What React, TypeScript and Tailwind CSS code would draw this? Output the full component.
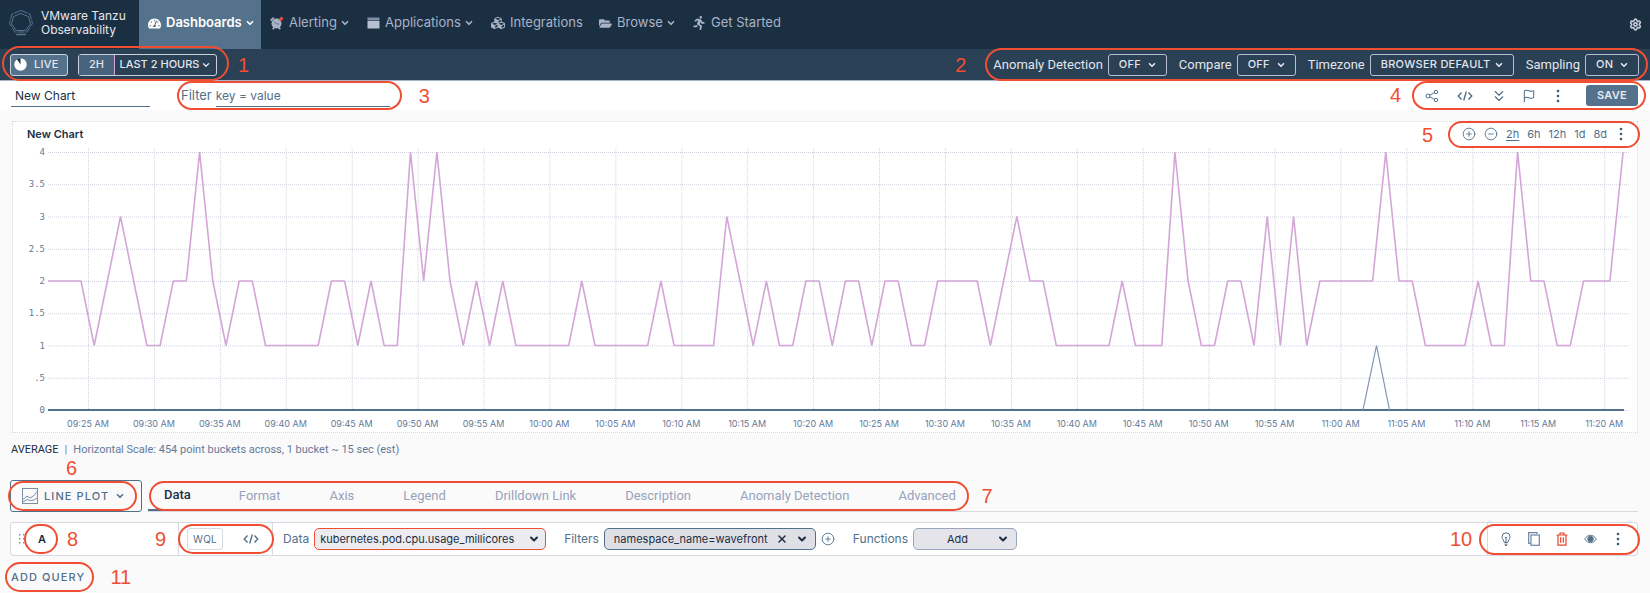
import React from "react";
import {
  ChevronDown,
  ChevronsDown,
  CirclePlus,
  CircleMinus,
  Flag,
  Settings,
  X,
} from "lucide-react";
import { FaTachometerAlt, FaCubes, FaFolderOpen, FaRunning } from "react-icons/fa";

/* ---------- callouts ---------- */

function Ring({ place }: { place: string }) {
  return (
    <span
      aria-hidden="true"
      className={`pointer-events-none absolute z-10 rounded-full border-2 border-[#f04e32] ${place}`}
    />
  );
}

function Num({ n, place }: { n: number; place: string }) {
  return (
    <span
      className={`pointer-events-none absolute z-10 font-['Liberation_Sans',sans-serif] text-xl leading-5 text-[#f04e32] ${place}`}
    >
      {n}
    </span>
  );
}

/* ---------- icons ---------- */

function Logo() {
  return (
    <svg width="26" height="28" viewBox="0 0 26 28" fill="none" stroke="#55748c" aria-hidden="true">
      <path d="M13 1.5 22 5l2.5 9.5L19 23H7L1.5 14.5 4 5Z" strokeWidth="1" strokeDasharray="7 1" />
      <path d="M13 4.5 20.5 7.5 22.5 15 17.5 21.5h-9L3.5 15l2-7.5Z" strokeWidth="1" />
      <path d="M8 25.500h10" strokeWidth="1.500" />
    </svg>
  );
}

function AlarmIcon() {
  return (
    <svg width="14" height="14" viewBox="0 0 14 14" aria-hidden="true">
      <circle cx="6.500" cy="7.500" r="5" fill="#a9b3c8" />
      <path d="M.6 4.600 3.800 1.600M2.800 13.200l1.400-1.800M10.200 13.200l-1.400-1.800" stroke="#a9b3c8" strokeWidth="1.800" />
      <path d="M4 5.500 6.500 8H9" stroke="#54728b" strokeWidth="1" fill="none" />
      <path d="M9.500 4.500 12.500 1.500" stroke="#f04e32" strokeWidth="3" />
    </svg>
  );
}

function WindowIcon() {
  return (
    <svg width="13" height="12" viewBox="0 0 13 12" aria-hidden="true">
      <rect x=".5" y=".5" width="12" height="3" fill="#7d8fa8" />
      <rect x=".5" y="4" width="12" height="7.500" fill="#b9bfd2" />
    </svg>
  );
}

function PieIcon() {
  return (
    <svg width="13" height="13" viewBox="0 0 13 13" aria-hidden="true">
      <circle cx="6.500" cy="6.500" r="6.200" fill="#fff" />
      <path d="M6.500 6.500V0L2.800 1Z" fill="#1b2f43" />
    </svg>
  );
}

function ShareIcon() {
  return (
    <svg width="14" height="14" viewBox="0 0 14 14" fill="none" stroke="#52708a" aria-hidden="true">
      <circle cx="3" cy="7" r="2" />
      <circle cx="11" cy="3" r="1.700" />
      <circle cx="11" cy="11" r="1.700" />
      <path d="M4.800 6.100 9.500 3.700M4.800 7.900l4.700 2.400" />
    </svg>
  );
}

function CodeIcon() {
  return (
    <svg width="16" height="12" viewBox="0 0 16 12" fill="none" stroke="#4a6881" strokeWidth="1.300" aria-hidden="true">
      <path d="M4.500 2.500 1.200 6l3.300 3.500M11.500 2.500 14.800 6l-3.300 3.500M9.300 1.500l-2.600 9" />
    </svg>
  );
}

function Dots() {
  return (
    <svg width="4" height="14" viewBox="0 0 4 14" fill="#3b5a75" aria-hidden="true">
      <circle cx="2" cy="2" r="1.300" />
      <circle cx="2" cy="7" r="1.300" />
      <circle cx="2" cy="12" r="1.300" />
    </svg>
  );
}

function PlotIcon() {
  return (
    <svg width="16" height="16" viewBox="0 0 16 16" fill="none" stroke="#7d8fa8" aria-hidden="true">
      <rect x=".5" y=".5" width="15" height="15" />
      <path d="M1 11.500 5 8l3 2 3.500-2L15 3.500M1 14l4-2.500 3 1 4-.5 3-2" />
    </svg>
  );
}

function GripIcon() {
  return (
    <svg width="6" height="10" viewBox="0 0 6 10" fill="#7d8fa8" aria-hidden="true">
      {[0, 4, 8].map((y) => (
        <g key={y}>
          <rect x="0" y={y} width="1.500" height="1.500" />
          <rect x="4" y={y} width="1.500" height="1.500" />
        </g>
      ))}
    </svg>
  );
}

function BulbIcon() {
  return (
    <svg width="10" height="14" viewBox="0 0 10 14" fill="none" stroke="#52708a" aria-hidden="true">
      <path d="M3.300 10.500C3.300 8.500 1 7.500 1 4.800a4 4 0 0 1 8 0c0 2.700-2.300 3.700-2.300 5.700Z" />
      <path d="M5 10V5.500M3.800 5 5 6l1.200-1M3.500 12.200h3M4 13.500h2" />
    </svg>
  );
}

function CopyIcon() {
  return (
    <svg width="12" height="14" viewBox="0 0 12 14" fill="none" stroke="#6d84a0" aria-hidden="true">
      <path d="M9 2V.7H.7v10.600H2.500" strokeWidth="1.200" />
      <rect x="3" y="3" width="8.300" height="10.300" strokeWidth="1.200" />
    </svg>
  );
}

function TrashIcon() {
  return (
    <svg width="12" height="14" viewBox="0 0 12 14" fill="none" stroke="#e8432c" strokeWidth="1.200" aria-hidden="true">
      <path d="M.5 3h11M4 3V1h4v2M2 3v10.200h8V3M4.700 5.200v5.600M7.300 5.200v5.600" />
    </svg>
  );
}

function EyeIcon() {
  return (
    <svg width="13" height="10" viewBox="0 0 14 10" fill="none" stroke="#52708a" aria-hidden="true">
      <path d="M.8 5C2.500 2.200 4.600 1 7 1s4.500 1.200 6.200 4C11.500 7.800 9.400 9 7 9S2.500 7.800.8 5Z" />
      <circle cx="7" cy="5" r="3" fill="#52708a" />
    </svg>
  );
}

/* ---------- navigation ---------- */

const navItems = [
  { label: "Dashboards", icon: <FaTachometerAlt size={13} />, menu: true, cls: "w-[122px] bg-[#54728b] font-semibold text-white" },
  { label: "Alerting", icon: <AlarmIcon />, menu: true, cls: "w-[97px] text-[#a9b3c8]" },
  { label: "Applications", icon: <WindowIcon />, menu: true, cls: "w-[124px] text-[#a9b3c8]" },
  { label: "Integrations", icon: <FaCubes size={14} />, menu: false, cls: "w-[108px] text-[#a9b3c8]" },
  { label: "Browse", icon: <FaFolderOpen size={13} />, menu: true, cls: "w-[93px] text-[#a9b3c8]" },
  { label: "Get Started", icon: <FaRunning size={14} />, menu: false, cls: "text-[#a9b3c8]" },
];

function NavBar() {
  return (
    <header className="flex h-[49px] items-stretch bg-[#1b2f43]">
      <a href="#home" className="flex w-[139px] shrink-0 items-center gap-[7px] pb-1 pl-2 text-[12px] leading-[14px] text-[#e6e8f0]">
        <Logo />
        <span>
          VMware Tanzu
          <br />
          Observability
        </span>
      </a>
      <nav className="flex">
        {navItems.map((item) => (
          <a
            key={item.label}
            href={`#${item.label}`}
            className={`flex shrink-0 items-center gap-[5px] pb-[3px] pl-[9px] text-[13px] whitespace-nowrap ${item.cls}`}
          >
            {item.icon}
            <span>{item.label}</span>
            {item.menu && <ChevronDown size={10} strokeWidth={4} className="-ml-0.5" />}
          </a>
        ))}
      </nav>
      <button type="button" aria-label="Settings" className="mr-2 ml-auto text-[#c4cada]">
        <Settings size={13} strokeWidth={3} />
      </button>
    </header>
  );
}

/* ---------- time and display bar ---------- */

function BarSelect({ id, label, value, width }: { id: string; label: string; value: string; width: string }) {
  return (
    <div className="flex items-center gap-[5px]">
      <label htmlFor={id} className="font-[Roboto,sans-serif] text-[13px] whitespace-nowrap">
        {label}
      </label>
      <div className="relative flex">
        <select
          id={id}
          defaultValue={value}
          className={`h-[22px] appearance-none rounded-[3px] border border-[#b8bfd2] bg-transparent pl-2.5 text-[11px] font-medium tracking-wide ${width}`}
        >
          <option>{value}</option>
        </select>
        <ChevronDown size={10} strokeWidth={4} className="pointer-events-none absolute top-[6px] right-2.5" />
      </div>
    </div>
  );
}

function TimeBar() {
  return (
    <div className="flex h-8 items-center justify-between border-b border-[#a9b3c8] bg-[#294055] pr-[11px] pl-2.5 text-[#e3e5ee]">
      <div className="relative flex gap-2.5">
        <button
          type="button"
          className="flex h-[22px] w-[58px] items-center gap-[7px] rounded-[3px] border border-[#c9cfdd] bg-[#54728b] pl-[3px] text-[11px] font-medium tracking-wide"
        >
          <PieIcon />
          LIVE
        </button>
        <button
          type="button"
          className="flex h-[22px] w-[139px] items-stretch rounded-[3px] border border-[#c9cfdd] text-[11px] font-medium whitespace-nowrap"
        >
          <span className="flex w-9 items-center justify-center border-r border-[#d4a6d8] bg-[#48647c]">2H</span>
          <span className="flex flex-1 items-center justify-center gap-0.5">
            LAST 2 HOURS
            <ChevronDown size={10} strokeWidth={3} />
          </span>
        </button>
        <Ring place="-top-2 -bottom-[5px] -left-2 -right-3" />
        <Num n={1} place="top-px -right-8" />
      </div>
      <div className="relative flex gap-3">
        <BarSelect id="anomaly" label="Anomaly Detection" value="OFF" width="w-[59px]" />
        <BarSelect id="compare" label="Compare" value="OFF" width="w-[59px]" />
        <BarSelect id="timezone" label="Timezone" value="BROWSER DEFAULT" width="w-[144px]" />
        <BarSelect id="sampling" label="Sampling" value="ON" width="w-[54px]" />
        <Ring place="-top-[6px] -bottom-[5px] -left-2 -right-[9px]" />
        <Num n={2} place="top-px -left-[38px]" />
      </div>
    </div>
  );
}

/* ---------- chart name, filter and actions ---------- */

function TitleBar() {
  return (
    <div className="flex h-[29px] items-center bg-white pr-3 pl-[11px] text-[12px]">
      <input
        aria-label="Chart name"
        defaultValue="New Chart"
        className="h-[22px] w-[139px] border-b border-[#52708a] pl-1 text-[#1b2f43]"
      />
      <div className="relative ml-[31px] flex items-center gap-1 text-[#52708a]">
        <label htmlFor="filter" className="text-[13px]">Filter</label>
        <input
          id="filter"
          placeholder="key = value"
          className="h-[22px] w-[174px] border-b border-[#52708a] placeholder:text-[#52708a]"
        />
        <Ring place="-top-1 -bottom-[3px] -left-1 -right-3" />
        <Num n={3} place="top-px -right-10" />
      </div>
      <div className="relative ml-auto flex items-center text-[#52708a]">
        <button type="button" aria-label="Share"><ShareIcon /></button>
        <button type="button" aria-label="Embed" className="ml-[18px]"><CodeIcon /></button>
        <button type="button" aria-label="Expand" className="ml-[17px]"><ChevronsDown size={18} strokeWidth={1.500} /></button>
        <button type="button" aria-label="Events" className="ml-[14px]"><Flag size={14} strokeWidth={1.800} /></button>
        <button type="button" aria-label="More" className="ml-5"><Dots /></button>
        <button
          type="button"
          className="ml-[26px] h-[21px] w-[52px] rounded-[3px] bg-[#54728b] text-[11px] font-semibold tracking-wide text-[#e6e8f0]"
        >
          SAVE
        </button>
        <Ring place="-top-1 -bottom-1 -left-[13px] -right-2" />
        <Num n={4} place="top-0 -left-[35px]" />
      </div>
    </div>
  );
}

/* ---------- chart ---------- */

// One sample per minute; the first sits at x = 33 of the plot.
const samples = [
  2, 1, 2, 3, 2, 1, 1, 2, 2, 4, 2, 1, 2, 2, 1, 1, 1, 1, 1, 2, 2, 1, 2, 1, 1, 4, 2, 4, 2, 1,
  2, 1, 2, 1, 1, 1, 1, 1, 2, 1, 1, 1, 1, 1, 2, 1, 1, 1, 1, 3, 2, 1, 2, 1, 1, 2, 2, 1, 2, 2,
  1, 2, 2, 1, 1, 2, 2, 2, 2, 1, 2, 3, 2, 2, 1, 1, 1, 1, 1, 2, 1, 1, 1, 4, 2, 1, 1, 2, 2, 1,
  3, 1, 3, 1, 2, 2, 2, 2, 2, 4, 2, 2, 1, 1, 1, 1, 2, 1, 1, 4, 2, 2, 1, 1, 2, 2, 2, 4,
];
const STEP = 13.18;
const yOf = (v: number) => 264 - v * 64.5;
const pink = `0,${yOf(2)} ` + samples.map((v, i) => `${(33 + i * STEP).toFixed(1)},${yOf(v)}`).join(" ");
const yLabels = ["4", "3.5", "3", "2.5", "2", "1.5", "1", ".5", "0"];
const xLabels = Array.from({ length: 24 }, (_, i) => {
  const m = 9 * 60 + 25 + i * 5;
  return `${String(Math.floor(m / 60)).padStart(2, "0")}:${String(m % 60).padStart(2, "0")} AM`;
});

function ChartCard() {
  return (
    <section className="mx-3 mt-[11px] border border-dotted border-[#d8d8e0] bg-white">
      <div className="flex h-6 items-center justify-between px-3.5">
        <h2 className="text-[11px] font-semibold text-[#1b2f43]">New Chart</h2>
        <div className="relative flex items-center text-[11px] text-[#52708a]">
          <button type="button" aria-label="Zoom in"><CirclePlus size={14} strokeWidth={1.500} /></button>
          <button type="button" aria-label="Zoom out" className="ml-2"><CircleMinus size={14} strokeWidth={1.500} /></button>
          <div className="ml-2 flex gap-2">
            <button type="button" className="underline underline-offset-2">2h</button>
            <button type="button">6h</button>
            <button type="button">12h</button>
            <button type="button">1d</button>
            <button type="button">8d</button>
          </div>
          <button type="button" aria-label="Chart menu" className="ml-3"><Dots /></button>
          <Ring place="-top-[5px] -bottom-[6px] -left-[14px] -right-[17px]" />
          <Num n={5} place="-top-px -left-10" />
        </div>
      </div>
      <div className="flex h-[270px] pr-2">
        <div className="flex w-8 shrink-0 flex-col justify-between text-right font-['DejaVu_Sans_Mono',monospace] text-[9px] leading-3 text-[#64799a]">
          {yLabels.map((l) => (
            <span key={l}>{l}</span>
          ))}
        </div>
        <svg
          role="img"
          aria-label="Line chart"
          className="ml-[3px] h-full min-w-0 flex-1"
          viewBox="0 0 1581 270"
          preserveAspectRatio="none"
          fill="none"
        >
          {yLabels.map((l, i) => (
            <line key={l} x1="0" x2="1581" y1={6.500 + i * 32.250} y2={6.500 + i * 32.250} stroke="#d0d1dc" strokeDasharray="1 1" />
          ))}
          {xLabels.map((l, i) => (
            <line key={l} y1="2" y2="266" x1={40.500 + i * 65.920} x2={40.500 + i * 65.920} stroke="#d0d1dc" strokeDasharray="1 1" />
          ))}
          <polyline points="0,264 1576,264" stroke="#52708a" strokeWidth="2" />
          <polyline points="1315,264 1328.500,199.500 1341.500,264" stroke="#8094ad" strokeWidth="1.200" />
          <polyline points={pink} stroke="#d4a6d8" strokeWidth="1.600" strokeLinejoin="bevel" />
        </svg>
      </div>
      <div className="ml-[42px] flex h-4 items-center text-[9px] text-[#64799a]">
        {xLabels.map((l) => (
          <span key={l} className="min-w-0 flex-1 text-center whitespace-nowrap">{l}</span>
        ))}
      </div>
    </section>
  );
}

/* ---------- tabs ---------- */

const tabs = ["Data", "Format", "Axis", "Legend", "Drilldown Link", "Description", "Anomaly Detection", "Advanced"];

function TabRow() {
  return (
    <div className="mr-3 ml-2.5 flex h-8 items-stretch">
      <div className="relative w-[132px] shrink-0">
        <button
          type="button"
          className="flex h-full w-full items-center gap-[6px] rounded-[3px] border border-[#52708a] pl-[11px] text-[11px] font-medium tracking-widest whitespace-nowrap text-[#52708a]"
        >
          <PlotIcon />
          LINE PLOT
          <ChevronDown size={10} strokeWidth={4} />
        </button>
        <Ring place="top-px bottom-px -left-0.5 right-[5px]" />
        <Num n={6} place="-top-[22px] left-[56px]" />
      </div>
      <div className="ml-[6px] flex flex-1 border-b border-[#d8d8e0]">
        <div className="relative flex font-[Roboto,sans-serif] text-[13px] text-[#98a2ba]" role="tablist">
          {tabs.map((t, i) => (
            <button
              key={t}
              type="button"
              role="tab"
              aria-selected={i === 0}
              className={
                i === 0
                  ? "mr-8 border-b-2 border-[#52708a] px-4 font-medium text-[#1b2f43]"
                  : "mr-[49px] whitespace-nowrap"
              }
            >
              {t}
            </button>
          ))}
          <Ring place="top-px bottom-0 left-px right-9" />
          <Num n={7} place="top-[6px] right-3" />
        </div>
      </div>
    </div>
  );
}

/* ---------- query row ---------- */

function QueryRow() {
  return (
    <div className="mt-2.5 mr-3 ml-2.5 flex h-[34px] items-stretch rounded-[3px] border border-[#d8d8e0] bg-white text-[12px] text-[#52708a]">
      <div className="relative flex w-[168px] shrink-0 items-center border-r border-[#d8d8e0] pl-2">
        <GripIcon />
        <span className="ml-[13px] text-[11px] font-semibold text-[#1b2f43]">A</span>
        <Ring place="top-px bottom-px left-[13px] w-[34px]" />
        <Num n={8} place="top-[6px] left-14" />
      </div>
      <div className="relative flex w-[94px] shrink-0 items-center border-r border-[#d8d8e0] pl-2">
        <button type="button" className="h-[22px] w-9 rounded-[3px] border border-[#d8d8e0] text-[10px] tracking-wide">
          WQL
        </button>
        <button type="button" aria-label="Query editor" className="ml-5"><CodeIcon /></button>
        <Ring place="top-px bottom-px -left-px -right-0.5" />
        <Num n={9} place="top-[6px] -left-6" />
      </div>
      <div className="ml-2.5 flex items-center gap-[5px]">
        <label htmlFor="metric">Data</label>
        <div className="relative flex">
          <select
            id="metric"
            className="h-[22px] w-[232px] appearance-none rounded-[5px] border border-[#f04e32] bg-[#ebebf0] pl-[5px] text-[11px] text-[#1b2f43]"
          >
            <option>kubernetes.pod.cpu.usage_millicores</option>
          </select>
          <ChevronDown size={12} strokeWidth={4} className="pointer-events-none absolute top-[5px] right-[6px] text-[#1b2f43]" />
        </div>
      </div>
      <div className="ml-[18px] flex items-center gap-[5px]">
        <label htmlFor="filters">Filters</label>
        <div className="relative flex h-[22px] w-[212px] items-center rounded-[5px] border border-[#52708a] bg-[#dfdfe6] text-[#1b2f43]">
          <select id="filters" className="h-5 w-[171px] appearance-none pl-[9px] text-[11px]">
            <option>namespace_name=wavefront</option>
          </select>
          <button type="button" aria-label="Clear filter"><X size={12} strokeWidth={3} /></button>
          <ChevronDown size={12} strokeWidth={4} className="ml-2" />
        </div>
        <button type="button" aria-label="Add filter"><CirclePlus size={14} strokeWidth={1.500} /></button>
      </div>
      <div className="ml-[18px] flex items-center gap-[5px]">
        <label htmlFor="functions">Functions</label>
        <div className="relative flex">
          <select
            id="functions"
            className="h-[22px] w-[104px] appearance-none rounded-[5px] border border-[#9aa5bd] bg-[#e4e4ea] pl-[33px] text-[11px] text-[#1b2f43]"
          >
            <option>Add</option>
          </select>
          <ChevronDown size={12} strokeWidth={4} className="pointer-events-none absolute top-[5px] right-2 text-[#1b2f43]" />
        </div>
      </div>
      <div className="relative ml-auto flex w-[150px] shrink-0 items-center border-l border-[#d8d8e0] pl-1">
        <button type="button" aria-label="Explain query" className="flex w-7 justify-center"><BulbIcon /></button>
        <button type="button" aria-label="Copy query" className="flex w-7 justify-center"><CopyIcon /></button>
        <button type="button" aria-label="Delete query" className="flex w-7 justify-center"><TrashIcon /></button>
        <button type="button" aria-label="Toggle visibility" className="flex w-7 justify-center"><EyeIcon /></button>
        <button type="button" aria-label="Query menu" className="flex w-7 justify-center"><Dots /></button>
        <Ring place="top-px bottom-0 -left-[9px] -right-[3px]" />
        <Num n={10} place="top-[6px] -left-[38px]" />
      </div>
    </div>
  );
}

export default function App() {
  return (
    <main className="min-h-screen bg-[#fafafb] font-[Inter,sans-serif]">
      <NavBar />
      <TimeBar />
      <TitleBar />
      <ChartCard />
      <p className="mt-[7px] mb-5 ml-[11px] flex h-5 items-center font-[Roboto,sans-serif] text-[11px] whitespace-nowrap text-[#64799a]">
        <span className="text-[#1b2f43]">AVERAGE</span>
        <span className="mx-1.5">|</span>
        <span>Horizontal Scale: 454 point buckets across, 1 bucket ~ 15 sec (est)</span>
      </p>
      <TabRow />
      <QueryRow />
      <div className="relative mt-[10px] ml-[11px] flex h-[22px] w-fit items-center">
        <button type="button" className="text-[11px] font-medium tracking-widest text-[#52708a]">ADD QUERY</button>
        <Ring place="-top-1 -bottom-1 -left-[6px] -right-[9px]" />
        <Num n={11} place="top-px -right-[46px]" />
      </div>
    </main>
  );
}
